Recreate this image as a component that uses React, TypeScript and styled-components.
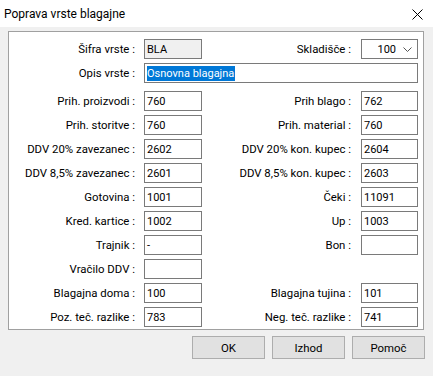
import styled, { createGlobalStyle } from 'styled-components';

const GlobalStyle = createGlobalStyle`
	html, body {
		margin: 0;
		padding: 0;
		background: #f0f0f0;
	}
	body {
		font-family: 'Segoe UI', Roboto, 'Noto Sans', sans-serif;
		font-size: 11.4px;
		color: #000;
	}
`;

interface FieldPair {
	label: string;
	value?: string;
}

const rows: [FieldPair, FieldPair | null][] = [
	[{ label: 'Prih. proizvodi :', value: '760' }, { label: 'Prih blago :', value: '762' }],
	[{ label: 'Prih. storitve :', value: '760' }, { label: 'Prih. material :', value: '760' }],
	[{ label: 'DDV 20% zavezanec :', value: '2602' }, { label: 'DDV 20% kon. kupec :', value: '2604' }],
	[{ label: 'DDV 8,5% zavezanec :', value: '2601' }, { label: 'DDV 8,5% kon. kupec :', value: '2603' }],
	[{ label: 'Gotovina :', value: '1001' }, { label: 'Čeki :', value: '11091' }],
	[{ label: 'Kred. kartice :', value: '1002' }, { label: 'Up :', value: '1003' }],
	[{ label: 'Trajnik :', value: '-' }, { label: 'Bon :', value: '' }],
	[{ label: 'Vračilo DDV :', value: '' }, null],
	[{ label: 'Blagajna doma :', value: '100' }, { label: 'Blagajna tujina :', value: '101' }],
	[{ label: 'Poz. teč. razlike :', value: '783' }, { label: 'Neg. teč. razlike :', value: '741' }],
];

export default function App() {
	return (
		<Window>
			<GlobalStyle />
			<TitleBar>
				<Title>Poprava vrste blagajne</Title>
				<CloseIcon width="11" height="11" viewBox="0 0 11 11">
					<path d="M0.5 0.5 L10.5 10.5 M10.5 0.5 L0.5 10.5" stroke="#000" strokeWidth="1" fill="none" />
				</CloseIcon>
			</TitleBar>
			<Body>
				<Panel>
					<FormGrid>
						<Label>Šifra vrste :</Label>
						<TextBox $disabled>BLA</TextBox>
						<Label $right>Skladišče :</Label>
						<Select>
							<span>100</span>
							<Chevron width="9" height="5" viewBox="0 0 9 5">
								<path d="M0.5 0.5 L4.5 4.5 L8.5 0.5" stroke="#555" strokeWidth="1" fill="none" />
							</Chevron>
						</Select>
						<Label>Opis vrste :</Label>
						<TextBox $wide>
							<Selected>Osnovna blagajna</Selected>
						</TextBox>
					</FormGrid>
					<FormGrid $spaced>
						{rows.map(([left, right], i) => (
							<Row key={i}>
								<Label>{left.label}</Label>
								<TextBox>{left.value}</TextBox>
								{right ? (
									<>
										<Label $right>{right.label}</Label>
										<TextBox>{right.value}</TextBox>
									</>
								) : (
									<>
										<span />
										<span />
									</>
								)}
							</Row>
						))}
					</FormGrid>
				</Panel>
				<Footer>
					<Button>OK</Button>
					<Button>Izhod</Button>
					<Button>Pomoč</Button>
				</Footer>
			</Body>
		</Window>
	);
}

const Window = styled.div`
	width: 433px;
	height: 376px;
	background: #f0f0f0;
	overflow: hidden;
`;

const TitleBar = styled.div`
	height: 27px;
	background: #fff;
	display: flex;
	align-items: center;
	justify-content: space-between;
	padding: 0 10px 0 4px;
	box-sizing: border-box;
`;

const Title = styled.span`
	font-size: 12px;
	line-height: 1;
	margin-top: 1px;
`;

const CloseIcon = styled.svg`
	display: block;
	margin-top: 1px;
`;

const Body = styled.div`
	padding: 4px 8px 0 8px;
`;

const Panel = styled.div`
	width: 416px;
	box-sizing: border-box;
	background: #fff;
	border: 1px solid #a0a0a0;
	padding: 7px 5px 2px 0;
`;

const FormGrid = styled.div<{ $spaced?: boolean }>`
	display: grid;
	grid-template-columns: 135px 58px 159px 57px;
	grid-auto-rows: 20px;
	row-gap: 4px;
	margin-top: ${(p) => (p.$spaced ? '8px' : '0')};
`;

const Row = styled.div`
	display: contents;
`;

const Label = styled.div<{ $right?: boolean }>`
	display: flex;
	align-items: center;
	justify-content: flex-end;
	padding-right: ${(p) => (p.$right ? '10px' : '9px')};
	white-space: nowrap;
	color: #000;
`;

const TextBox = styled.div<{ $disabled?: boolean; $wide?: boolean }>`
	box-sizing: border-box;
	height: 20px;
	border: 1px solid #7a7a7a;
	background: ${(p) => (p.$disabled ? '#f0f0f0' : '#fff')};
	padding: 0 2px;
	display: flex;
	align-items: center;
	overflow: hidden;
	white-space: nowrap;
	font-size: 11px;
	grid-column: ${(p) => (p.$wide ? '2 / 5' : 'auto')};
`;

const Selected = styled.span`
	background: #0078d7;
	color: #fff;
	line-height: 15px;
	padding-right: 1px;
`;

const Select = styled.div`
	box-sizing: border-box;
	height: 20px;
	border: 1px solid #7a7a7a;
	background: #fff;
	display: flex;
	align-items: center;
	justify-content: flex-end;
	gap: 7px;
	padding-right: 5px;
	font-size: 11px;
`;

const Chevron = styled.svg`
	display: block;
`;

const Footer = styled.div`
	display: flex;
	justify-content: flex-end;
	gap: 7px;
	margin-top: 6px;
`;

const Button = styled.button`
	width: 73px;
	height: 23px;
	box-sizing: border-box;
	background: #e1e1e1;
	border: 1px solid #adadad;
	font-family: inherit;
	font-size: 11.4px;
	font-weight: 400;
	color: #000;
	padding: 0;
`;
